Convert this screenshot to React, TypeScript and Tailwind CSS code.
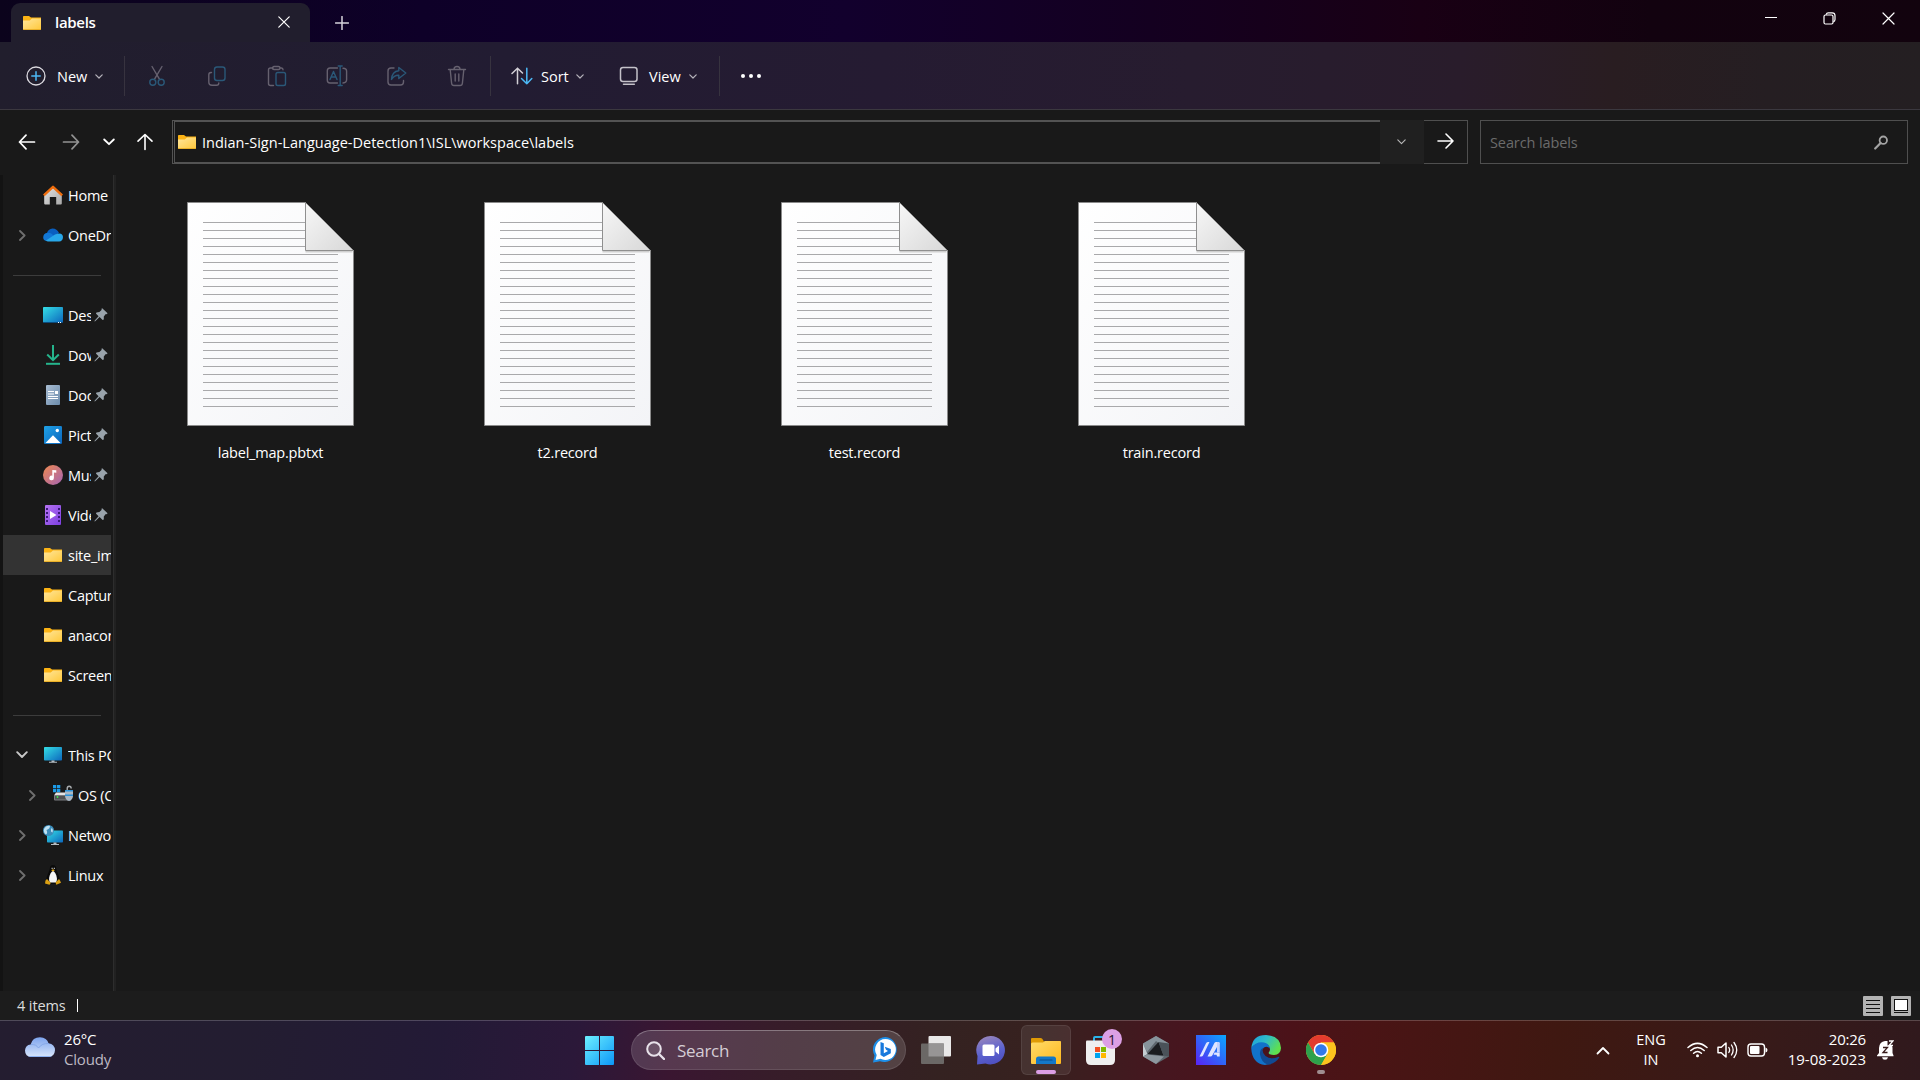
import type { ReactNode } from "react";

function Folder({ w = 18, h = 16, open = false }: { w?: number; h?: number; open?: boolean }) {
  return (
    <svg width={w} height={h} viewBox="0 0 18 16" preserveAspectRatio="none" className="shrink-0">
      <defs>
        <linearGradient id="fold" x1="0" y1="0" x2="1" y2="1">
          <stop offset="0" stopColor="#ffe69c" />
          <stop offset="1" stopColor="#ffc83a" />
        </linearGradient>
      </defs>
      <path d="M0 1.8Q0 1 .8 1H6l2 1.6h10V6H0z" fill={open ? "#dd9d08" : "#fbb315"} />
      <path d="M0 5.4h6.8L9 3.6h9v10.6q0 .8-.8.8H.8q-.8 0-.8-.8z" fill="url(#fold)" />
      <path d="M0 14.2h18v.2q0 .6-.8.6H.8q-.8 0-.8-.6z" fill="#e3a71c" />
    </svg>
  );
}

function Line({
  w,
  h,
  d,
  stroke = "#fff",
  sw = 1.5,
  className = "",
}: {
  w: number;
  h: number;
  d: string;
  stroke?: string;
  sw?: number;
  className?: string;
}) {
  return (
    <svg
      width={w}
      height={h}
      viewBox={`0 0 ${w} ${h}`}
      fill="none"
      stroke={stroke}
      strokeWidth={sw}
      strokeLinecap="round"
      strokeLinejoin="round"
      className={`shrink-0 ${className}`}
    >
      <path d={d} />
    </svg>
  );
}

function TitleBar() {
  return (
    <div className="flex h-[42px] shrink-0 bg-[linear-gradient(90deg,#0b031c_0%,#0e0028_22%,#12002d_44%,#140020_60%,#190014_74%,#12020f_86%,#12030e_100%)]">
      <div className="mt-[3px] ml-[11px] flex h-[39px] w-[299px] items-center rounded-t-[9px] bg-[#211e2d] pl-3">
        <Folder />
        <span className="ml-[14px] text-[15px] font-semibold tracking-[-0.3px]">labels</span>
        <Line w={12} h={12} d="M.8.8l10.4 10.4M11.2.8L.8 11.2" sw={1.2} className="-mt-px mr-[20px] ml-auto" />
      </div>
      <Line w={14} h={14} d="M7 .5v13M.5 7h13" stroke="#d6d3db" sw={1.5} className="mt-[16px] ml-[25px]" />
      <div className="ml-auto flex h-9 items-center pr-[25px]">
        <Line w={12} h={12} d="M.5 5.5h11" sw={1.2} />
        <svg width="13" height="13" viewBox="0 0 13 13" fill="none" stroke="#fff" strokeWidth="1.2" className="ml-[46px]">
          <rect x="1" y="3" width="9" height="9" rx="1.5" />
          <path d="M3.2 2.8V2.4Q3.6.8 5.2.8H9.2Q12 .8 12 3.6v4q0 1.800-1.600 2.200" />
        </svg>
        <Line w={13} h={13} d="M1 1l11 11M12 1L1 12" sw={1.2} className="ml-[46px]" />
      </div>
    </div>
  );
}

const G = "#66616f";
const B = "#2a5878";

function Tool({ children }: { children: ReactNode }) {
  return (
    <div className="flex w-[60px] justify-center">
      <svg width="22" height="22" viewBox="0 0 22 22" fill="none" strokeWidth="1.4" strokeLinecap="round" strokeLinejoin="round" stroke={G}>
        {children}
      </svg>
    </div>
  );
}

function Toolbar() {
  return (
    <div className="flex h-[68px] shrink-0 items-center border-b border-[#3b383f] bg-[linear-gradient(94deg,#211e2d_0%,#221c32_26%,#251b32_46%,#271c2f_62%,#291c2b_76%,#291d21_84%,#251e22_92%,#241f22_100%)] pt-px text-[14.5px]">
      <svg width="20" height="20" viewBox="0 0 20 20" fill="none" className="ml-[26px]">
        <circle cx="10" cy="10" r="9" stroke="#dcdae0" strokeWidth="1.3" />
        <path d="M10 5.800v8.400M5.800 10h8.400" stroke="#4cb8f5" strokeWidth="1.5" strokeLinecap="round" />
      </svg>
      <span className="ml-[11px] w-[38px] pt-[2px]">New</span>
      <Line w={8} h={5} d="M.8.8L4 4 7.200.8" stroke="#b5b2ba" sw={1.2} />
      <div className="ml-[21px] h-10 w-px bg-[#37333f]" />
      <div className="ml-[2px] flex">
        <Tool>
          <path d="M6 1.500L13.600 14.400M16 1.500L8.400 14.400" />
          <circle cx="6.800" cy="17.200" r="3" stroke={B} />
          <circle cx="15.200" cy="17.200" r="3" stroke={B} />
        </Tool>
        <Tool>
          <path d="M5.500 7.500H5Q2.800 7.500 2.800 9.700V17Q2.800 20.200 6 20.200h4.500q2.300 0 2.300-2.200" />
          <rect x="8.500" y="2" width="10.500" height="13.500" rx="2.500" stroke={B} />
        </Tool>
        <Tool>
          <path d="M7 3H4.500Q2.500 3 2.500 5v13.500q0 2 2 2H7.500M14 3h1.500q1.500 0 1.500 1.800" />
          <rect x="6.500" y="1.500" width="7.500" height="3" rx="1.500" />
          <rect x="10" y="7.500" width="9.500" height="13" rx="1.800" stroke={B} />
        </Tool>
        <Tool>
          <path d="M11.500 3H4Q1.300 3 1.300 5.700v9.600Q1.300 18 4 18h7.500M17 3.200q3.600 0 3.600 3v8.600q0 3-3.600 3.200" />
          <path d="M4 14.500L7.500 6.500l3.500 8M5.200 12h4.600M14.200 1v19.500M12.200 1h4M12.200 20.500h4" stroke={B} />
        </Tool>
        <Tool>
          <path d="M8 3H5Q2 3 2 6v11q0 3 3 3h9.500q3 0 3-3v-1.500" />
          <path d="M12.800 2.500l7 5.500-7 5.500v-3.300Q8 10 5.500 14.500 6 6.500 12.800 5.800z" stroke={B} />
        </Tool>
        <Tool>
          <path d="M2.500 4.500h17M8 4.300Q8 1.500 11 1.500t3 2.800M4.200 4.800l1.400 13.400q.2 2.300 2.400 2.300h6q2.200 0 2.400-2.300l1.400-13.400M9.200 9v7M12.800 9v7" />
        </Tool>
      </div>
      <div className="ml-[3px] h-10 w-px bg-[#37333f]" />
      <svg width="22" height="18" viewBox="0 0 22 18" fill="none" strokeWidth="1.5" strokeLinecap="round" strokeLinejoin="round" className="ml-[20px]">
        <path d="M1 6.500L6.500 1.200 11.500 6M6.500 1.200v15.600" stroke="#d2cfd6" />
        <path d="M10.500 11.500l5.300 5.300 5-5.300M15.800 16.800V1.200" stroke="#4cb8f5" />
      </svg>
      <span className="ml-[8px] w-[35px] pt-[2px]">Sort</span>
      <Line w={8} h={5} d="M.8.8L4 4 7.200.8" stroke="#b5b2ba" sw={1.2} />
      <svg width="20" height="20" viewBox="0 0 20 20" fill="none" stroke="#c4c1c9" strokeWidth="1.500" strokeLinecap="round" className="ml-[35px]">
        <rect x="1.500" y="1.500" width="16.500" height="14" rx="2.500" />
        <path d="M4.500 18.200h10.800" />
      </svg>
      <span className="ml-[10px] w-[40px] pt-[2px]">View</span>
      <Line w={8} h={5} d="M.8.8L4 4 7.200.8" stroke="#b5b2ba" sw={1.2} />
      <div className="ml-[22px] h-10 w-px bg-[#37333f]" />
      <div className="ml-[21px] flex gap-[4px]">
        <i className="size-1 rounded-full bg-white" />
        <i className="size-1 rounded-full bg-white" />
        <i className="size-1 rounded-full bg-white" />
      </div>
    </div>
  );
}

function AddressRow() {
  return (
    <div className="flex h-[65px] shrink-0 pt-[10px] text-[14.5px]">
      <div className="flex h-[44px] w-[172px] items-center">
        <Line w={18} h={16} d="M8 1.200L1.500 8 8 14.800M1.500 8h15" sw={1.700} className="ml-[18px]" />
        <Line w={18} h={16} d="M10 1.200L16.500 8 10 14.800M16.500 8h-15" stroke="#929292" sw={1.700} className="ml-[26px]" />
        <Line w={12} h={8} d="M1.200 1.500L6 6.200l4.800-4.700" sw={1.800} className="-mt-px ml-[23px]" />
        <Line w={18} h={18} d="M2 8.200L9 1.500l7 6.700M9 1.500V16.500" sw={1.600} className="ml-[21px]" />
      </div>
      <div className="h-[44px] w-[1208px] border border-r-0 border-[#535353] pl-px">
        <div className="flex h-[42px] items-center border border-r-0 border-[#535353] pl-[3px]">
          <Folder />
          <span className="ml-[6px] pt-[2px] whitespace-pre tracking-[0.015px]">Indian-Sign-Language-Detection1\ISL\workspace\labels</span>
        </div>
      </div>
      <div className="flex h-[44px] w-[44px] items-center justify-center bg-[#202020] pr-px">
        <Line w={9} h={6} d="M.8.800L4.500 4.700 8.200.8" stroke="#b8b8b8" sw={1.100} />
      </div>
      <div className="flex h-[44px] w-[44px] items-center justify-center border border-l-0 border-[#4f4f4f]">
        <Line w={17} h={16} d="M9 1l7 7-7 7M16 8H1" sw={1.600} className="-mt-[3px]" />
      </div>
      <div className="ml-[12px] flex h-[44px] w-[428px] items-center border border-[#4f4f4f] pr-[18px] pl-[9px] text-[#6b6b6b]">
        <span className="pt-[2px] tracking-[-0.1px]">Search labels</span>
        <svg width="15" height="15" viewBox="0 0 15 15" fill="none" stroke="#a3a3a3" strokeWidth="1.800" className="ml-auto">
          <circle cx="9.300" cy="5.200" r="3.700" />
          <path d="M6.600 8L1.200 13.500" strokeWidth="2.200" strokeLinecap="round" />
        </svg>
      </div>
    </div>
  );
}

const sideIcons: Record<string, ReactNode> = {
  home: (
    <>
      <path d="M1.200 9L10 2l8.800 7v9.500q0 1-1 1h-4.600V12H6.800v7.500H2.200q-1 0-1-1z" fill="url(#hg)" />
      <path d="M.8 10.300L10 1.800l9.200 8.500" stroke="#ee6c0c" strokeWidth="2.400" fill="none" strokeLinejoin="round" />
    </>
  ),
  onedrive: (
    <>
      <path d="M4 8Q5 4 9.500 3.500 14 3.500 16 8l-6 4z" fill="#0a5fc0" />
      <path d="M.2 12.500Q.2 8.500 4.500 7.800 8 7.500 10 10l6 6H4Q.3 15.800.2 12.500z" fill="#1277d6" />
      <path d="M3 15.500L12 9.500Q19.500 6.500 20 12q-.2 4.300-4 4.500H5Q3.800 16.500 3 15.500z" fill="#28a8ea" />
    </>
  ),
  desktop: (
    <>
      <rect x="0" y="2" width="20" height="15.500" rx=".8" fill="url(#bg1)" />
      <path d="M0 17.200h20v.8H0z" fill="#0a4a80" />
      <path d="M15 17h1v1h-1zM17 17h1v1h-1z" fill="#fff" />
    </>
  ),
  down: (
    <g fill="none" stroke="#25b48c" strokeWidth="2">
      <path d="M10 0v15M4.200 9.500L10 15.200l5.800-5.700" />
      <path d="M3 18.800h14" />
    </g>
  ),
  doc: (
    <>
      <rect x="3" y="0" width="14" height="20" rx="1" fill="url(#dg)" />
      <path d="M5 6.500h6M5 9h6M5 11.500h10M5 13.500h10" stroke="#fff" strokeWidth="1.200" />
      <path d="M12 6h3v3h-3z" fill="#fff" />
    </>
  ),
  pic: (
    <>
      <rect x="1" y="1" width="18" height="18" rx="1.300" fill="url(#pg)" />
      <path d="M2.500 18L10 10.200 17.500 18z" fill="#fff" />
      <circle cx="14.300" cy="5.500" r="1.700" fill="#fff" />
    </>
  ),
  music: (
    <>
      <circle cx="10" cy="10" r="10" fill="url(#mg)" />
      <path d="M9.300 5l4 .3v2.400l-2.400-.2v5.500a2.300 2.300 0 1 1-1.600-2.200z" fill="#fff" />
    </>
  ),
  video: (
    <>
      <rect x="2" y="0" width="16" height="20" rx="1" fill="url(#vg)" />
      <path d="M3 3h2v2H3zM3 7h2v2H3zM3 11h2v2H3zM3 15h2v2H3zM15 3h2v2h-2zM15 7h2v2h-2zM15 11h2v2h-2zM15 15h2v2h-2z" fill="#3a1a78" />
      <path d="M7 6l6.500 4L7 14z" fill="#fff" />
    </>
  ),
  pc: (
    <>
      <rect x="1" y="2" width="18" height="13.500" rx=".8" fill="url(#bg1)" />
      <path d="M8.500 15.500h3v1.300h2.500v1H6v-1h2.500z" fill="#b4bcc2" />
    </>
  ),
  drive: (
    <>
      <path d="M0 0h3.300v3.200H0zM4 0h3.300v3.200H4zM0 4h3.300v3.200H0zM4 4h3.300v3.200H4z" fill="#1c9be8" />
      <path d="M3 7.500h11l3 3H1z" fill="#e4e4e4" />
      <rect x="1" y="10" width="17" height="5.500" rx="1" fill="#7b7d80" />
      <path d="M2 11h15v3.500H2z" fill="#505254" />
      <circle cx="4.500" cy="12" r=".9" fill="#3eea4b" />
      <path d="M14.200 6V3.500q0-2.200 2-2.200t2 2.200" fill="none" stroke="#a9adb0" strokeWidth="1.400" />
      <path d="M12 5h8v6q-.5 4.200-4 5-3.500-.8-4-5z" fill="#aab9c6" />
      <path d="M12 5h8v1.500h-8zM12 9.500h8V11h-8z" fill="#2b94dc" />
    </>
  ),
  net: (
    <>
      <rect x="4" y="5.500" width="16" height="12" rx=".8" fill="url(#bg1)" />
      <path d="M10.500 17.500h3v1.500h2.500v1H8v-1h2.500z" fill="#b4bcc2" />
      <circle cx="5.500" cy="5.500" r="5.500" fill="#3b8dbb" />
      <path d="M1 4Q3 0 7 .8 7 4 3.500 5 5 8 3 9.500.2 7.500 1 4zM8.500 3Q10.500 4 9.500 7.500 7 7 8.500 3z" fill="#bfe1f2" />
    </>
  ),
  linux: (
    <>
      <path d="M10 0q3 0 3.200 3.600Q13.500 6 15 8.500q2.200 4 1 8l-3 2.500H7L4 16.500q-1.200-4 1-8Q6.600 6 6.800 3.600 7 0 10 0z" fill="#0a0a0a" />
      <path d="M10 6q2 .5 3.300 4.500 1.400 4.500-.3 7H7q-1.700-2.500-.3-7Q8 6.500 10 6z" fill="#f5f5f5" />
      <path d="M8.200 5.200l1.800-1 1.800 1L10 6.600z" fill="#e8a90e" />
      <path d="M8.600 2.800h1v1.300h-1zM10.800 2.800h1v1.300h-1z" fill="#ddd" />
      <path d="M4 14l3.800 4-1.300 1.800L2 18.500l.5-3zM16 14l-3.500 3.500.8 2.300 4.700-2-1-2.300z" fill="#dba012" />
    </>
  ),
};

function Defs() {
  const g: [string, string, string][] = [
    ["hg", "#e4e4e4", "#a8a8a8"],
    ["bg1", "#35dfe6", "#0c67bd"],
    ["dg", "#a9bdd3", "#6b8bab"],
    ["pg", "#1fa2e6", "#0b65bd"],
    ["mg", "#f0894f", "#a464b4"],
    ["vg", "#b673f2", "#7c3fe0"],
    ["paper", "#ffffff", "#f3f4f7"],
    ["flap", "#f7f7f7", "#d8d8d8"],
    ["win", "#6df0ff", "#0c97f8"],
  ];
  return (
    <svg width="0" height="0" className="absolute">
      <defs>
        {g.map(([id, a, b]) => (
          <linearGradient key={id} id={id} x1="0" y1="0" x2="1" y2="1">
            <stop offset="0" stopColor={a} />
            <stop offset="1" stopColor={b} />
          </linearGradient>
        ))}
      </defs>
    </svg>
  );
}

function Pin() {
  return (
    <svg width="14" height="14" viewBox="0 0 14 14" className="ml-[3px] shrink-0">
      <path d="M8.200.300L13.600 5.200 12.600 6.300 11.800 6 9.800 8.500 9.800 11.500 8.600 12 5.600 9 1.200 13.200.500 13.500.700 12.600 4.600 8.200 1.900 5.400 2.500 4.400 5.400 4 7.800 1.700 7.300.900z" fill="#98a2aa" />
    </svg>
  );
}

type Row = { icon: string; text: string; pin?: boolean; arrow?: "r" | "d"; sel?: boolean; indent?: boolean };
const rows: (Row | null)[] = [
  { icon: "home", text: "Home" },
  { icon: "onedrive", text: "OneDrive", arrow: "r" },
  null,
  { icon: "desktop", text: "Desktop", pin: true },
  { icon: "down", text: "Downloads", pin: true },
  { icon: "doc", text: "Documents", pin: true },
  { icon: "pic", text: "Pictures", pin: true },
  { icon: "music", text: "Music", pin: true },
  { icon: "video", text: "Videos", pin: true },
  { icon: "folder", text: "site_images", sel: true },
  { icon: "folder", text: "Captures" },
  { icon: "folder", text: "anaconda" },
  { icon: "folder", text: "Screenshots" },
  null,
  { icon: "pc", text: "This PC", arrow: "d" },
  { icon: "drive", text: "OS (C:)", arrow: "r", indent: true },
  { icon: "net", text: "Network", arrow: "r" },
  { icon: "linux", text: "Linux", arrow: "r" },
];

function Sidebar() {
  return (
    <div className="flex w-[116px] shrink-0 border-l-[3px] border-[#131313]">
      <div className="w-[108px] overflow-hidden">
        {rows.map((r, i) =>
          r === null ? (
            <div key={i} className="flex h-10 items-center">
              <div className="ml-[10px] h-px w-[88px] bg-[#3c3c3c]" />
            </div>
          ) : (
            <div key={i} className={`flex h-10 items-center ${r.sel ? "bg-[#333333]" : ""} ${r.indent ? "pl-[10px]" : ""}`}>
              <div className="flex w-[40px] shrink-0 items-center">
                {r.arrow === "r" && <Line w={7} h={11} d="M1 1l4.600 4.500L1 10" stroke="#6f6f6f" sw={1.800} className="ml-[16px]" />}
                {r.arrow === "d" && <Line w={12} h={8} d="M1.200 1.200L6 6l4.800-4.800" stroke="#c8c8c8" sw={1.900} className="ml-[13px]" />}
              </div>
              <div className="flex w-5 shrink-0 justify-center">
                {r.icon === "folder" ? (
                  <Folder />
                ) : (
                  <svg width="20" height="20" viewBox="0 0 20 20">
                    {sideIcons[r.icon]}
                  </svg>
                )}
              </div>
              <span className={`ml-[5px] shrink-0 overflow-hidden pt-[2px] text-[14.5px] whitespace-nowrap tracking-[-0.25px] ${r.pin ? "w-[23px]" : "w-[80px]"}`}>{r.text}</span>
              {r.pin && <Pin />}
            </div>
          ),
        )}
      </div>
      <div className="ml-[2px] h-full w-[3px] border-l border-[#2d2d2d] bg-[#212121]" />
    </div>
  );
}

function FileItem({ name }: { name: string }) {
  return (
    <div className="flex w-[297px] flex-col items-center">
      <svg width="167" height="224" viewBox="0 0 167 224">
        <path d="M.5.5H118.500L166.500 48.500V223.500H.5z" fill="url(#paper)" stroke="#8b8b8b" />
        {Array.from({ length: 24 }, (_, i) => (
          <path key={i} d={`M16 ${20.5 + i * 8}H${i < 4 ? 118 : 151}`} stroke="#a9a9ab" />
        ))}
        <path d="M118.500 49.500h47" stroke="#cfcfcf" strokeWidth="2" />
        <path d="M118.500.5L166.500 48.500H118.500z" fill="url(#flap)" stroke="#8f8f8f" />
      </svg>
      <span className="mt-[16px] text-[14.5px] leading-[22px] tracking-[-0.2px]">{name}</span>
    </div>
  );
}

function StatusBar() {
  return (
    <div className="flex h-[29px] shrink-0 items-center bg-[#1c1c1c] pr-[9px] pl-[17px] text-[14.5px]">
      <span className="w-[60px] tracking-[-0.1px] text-[#dcdcdc]">4 items</span>
      <div className="h-[13px] w-px bg-white" />
      <svg width="20" height="20" viewBox="0 0 20 20" className="ml-auto">
        <rect width="20" height="20" rx="1" fill="#b3b3b3" />
        <path d="M3 4.500h14M3 8.500h14M3 12.500h14M3 16.500h14" stroke="#111" />
      </svg>
      <svg width="20" height="20" viewBox="0 0 20 20" className="ml-2">
        <rect width="20" height="20" rx="1" fill="#b3b3b3" />
        <rect x="3.500" y="3.500" width="13" height="11" fill="#fff" stroke="#111" />
        <path d="M3 16.500h14" stroke="#111" />
      </svg>
    </div>
  );
}

function Taskbar() {
  return (
    <div className="flex h-[60px] shrink-0 items-center border-t border-white/20 bg-[linear-gradient(97deg,#241d30_0%,#231d31_13%,#231a36_23%,#2b1839_30%,#3a1631_35%,#371c2a_40%,#342221_49%,#37211f_54%,#46161f_61%,#4b1219_67%,#4a1415_71%,#3f1811_81%,#371a19_92%,#30191d_100%)] pb-px">
      <div className="flex w-[585px] items-center pl-[25px]">
        <svg width="30" height="20" viewBox="0 0 30 20" className="-mt-[6px]">
          <defs>
            <linearGradient id="cl" x1="0" y1="0" x2="0" y2="1">
              <stop offset="0" stopColor="#7da4ee" />
              <stop offset="1" stopColor="#d8e6fb" />
            </linearGradient>
          </defs>
          <path d="M6.500 20Q0 19.500 0 13.500 .500 8 5.600 7.500 7.500.200 15 .2q7 .3 8.500 6Q29.800 7 30 13.300 29.500 19.500 24 20z" fill="url(#cl)" />
          <path d="M6 7.500Q11 7 13.500 11 17 6 23.500 6.500" fill="none" stroke="#86a9ea" strokeWidth="1" />
          <path d="M3 19h24q-1 1-3 1H6.500Q4 20 3 19z" fill="#8db2f2" />
        </svg>
        <div className="-mt-[3px] ml-[9px] flex flex-col text-[15px] leading-5 tracking-[-0.2px]">
          <span>26°C</span>
          <span className="text-[#bdb9c3]">Cloudy</span>
        </div>
      </div>
      <svg width="29" height="29" viewBox="0 0 29 29" className="mt-px">
        <path d="M1 0H14V14H0V1Q0 0 1 0zM15 0H28q1 0 1 1V14H15zM0 15H14V29H1Q0 29 0 28zM15 15H29V28q0 1-1 1H15z" fill="url(#win)" />
      </svg>
      <div className="ml-[17px] flex h-10 w-[275px] items-center rounded-full border border-white/10 border-t-white/30 bg-white/15 pl-[14px]">
        <svg width="19" height="19" viewBox="0 0 19 19" fill="none" stroke="#e8e2ea" strokeWidth="2" strokeLinecap="round">
          <circle cx="8" cy="8" r="6.800" fill="#ffffff22" />
          <path d="M13 13l5 5" strokeWidth="2.400" />
        </svg>
        <span className="ml-[12px] pt-px text-[17px] tracking-[-0.3px] text-[#d5cdd5]">Search</span>
        <svg width="25" height="26" viewBox="0 0 25 26" className="mr-[7px] ml-auto">
          <path d="M12.500 0A12.500 12.500 0 1 1 7 24.200L0 25.500 1.500 18.500A12.500 12.500 0 0 1 12.500 0z" fill="#1d8fe8" />
          <path d="M12.500 2a10.500 10.500 0 1 1-5 19.800L2.500 23l1.200-5A10.500 10.500 0 0 1 12.500 2z" fill="#fff" />
          <path d="M7.500 5l3.300 1.300v10L15 14l-2-1.200-1.200-3 6 2.200v4.200L10.800 20l-3.300-2z" fill="#1879dc" />
        </svg>
      </div>
      <svg width="30" height="28" viewBox="0 0 30 28" className="ml-[15px]">
        <rect x="7.500" width="22.500" height="20.500" rx="1" fill="#e9e8e8" />
        <rect y="7.500" width="23" height="20.500" rx="1" fill="#6b6866" />
        <path d="M7.500 7.500h15.500v13H7.500z" fill="#979595" />
      </svg>
      <svg width="29" height="29" viewBox="0 0 29 29" className="mt-px ml-[25px]">
        <defs>
          <linearGradient id="ch" x1="0.200" y1="0" x2="0.500" y2="1">
            <stop offset="0" stopColor="#9a86bb" />
            <stop offset=".6" stopColor="#5b62cf" />
            <stop offset="1" stopColor="#4f50c0" />
          </linearGradient>
        </defs>
        <path d="M14.500 0a14.200 14.200 0 1 1-5 27.400L1 28.500 1.500 20A14.200 14.200 0 0 1 14.500 0z" fill="url(#ch)" />
        <rect x="6.500" y="8.500" width="12" height="11.500" rx="1.500" fill="#fff" />
        <path d="M19.500 12.500l3.500-3v9l-3.500-3z" fill="#fff" />
      </svg>
      <div className="ml-[16px] flex h-[50px] w-[50px] flex-col items-center rounded-md border border-white/8 bg-white/8 pt-[11px]">
        <svg width="30" height="27" viewBox="0 0 30 27" className="shrink-0">
          <path d="M0 2Q0 1 1 1h8.500q1 0 1.700.800L13 4.500h16q1 0 1 1V12H0z" fill="#df9a05" />
          <path d="M0 7q0-1.500 1.500-1.500L12 5.500l2-1.500h15q1 0 1 1v21q0 1-1 1H1q-1 0-1-1z" fill="url(#tf)" />
          <defs>
            <linearGradient id="tf" x1="0" y1="0" x2="1" y2="1">
              <stop offset="0" stopColor="#ffdb6b" />
              <stop offset="1" stopColor="#ffb81c" />
            </linearGradient>
          </defs>
          <path d="M5 27v-5q0-2.500 2.500-2.500h15Q25 19.500 25 22v5z" fill="#1478c8" />
          <path d="M9 23h12" stroke="#0b4c8c" strokeWidth="1.200" strokeLinecap="round" />
        </svg>
        <i className="mt-[6px] h-1 w-5 shrink-0 rounded-full bg-[#dc9fe5]" />
      </div>
      <div className="relative mt-px ml-[15px] h-[29px] w-[29px]">
        <svg width="29" height="29" viewBox="0 0 29 29">
          <path d="M8 5V2Q8 1 9 1h10" fill="none" stroke="#2cb3e8" strokeWidth="2" />
          <path d="M0 5.500Q0 4.500 1 4.500h27q1 0 1 1V24q0 5-5 5H5q-5 0-5-5z" fill="#efefef" />
          <path d="M9 11h5v5H9z" fill="#f25022" />
          <path d="M15 11h5v5h-5z" fill="#7fba00" />
          <path d="M9 17h5v5H9z" fill="#00a4ef" />
          <path d="M15 17h5v5h-5z" fill="#ffb900" />
        </svg>
        <div className="absolute -top-[7px] left-[16px] flex size-5 items-center justify-center rounded-full bg-[#dc9fe5] text-[14px] text-[#2a1530]">1</div>
      </div>
      <svg width="28" height="28" viewBox="0 0 28 28" className="ml-[27px]">
        <path d="M14 0L27 7.500V20.500L14 28 1 20.500V7.500z" fill="#5d666d" />
        <path d="M14 0L27 7.500 21 10 14 5 5 16 1 7.500z" fill="#87939b" />
        <path d="M1 7.500L5.500 18 1 20.500z" fill="#c4cdd2" />
        <path d="M1 20.500L5.500 18.500 22 20.500 14 28z" fill="#8d979e" />
        <path d="M16.500 6L21.500 19.500 5.500 18z" fill="#1b1d20" />
        <path d="M16.500 6L27 7.500V20.500L21.500 19.500z" fill="#4a5259" />
      </svg>
      <svg width="30" height="30" viewBox="0 0 30 30" className="ml-[26px]">
        <defs>
          <linearGradient id="ma" x1="0" y1="1" x2="1" y2="0">
            <stop offset="0" stopColor="#5a22f5" />
            <stop offset=".5" stopColor="#2f66f8" />
            <stop offset="1" stopColor="#0aa8ff" />
          </linearGradient>
        </defs>
        <rect width="30" height="30" fill="url(#ma)" />
        <path d="M3.500 21.500L10.200 8q.6-1 2-1h1.300L7 20.500q-.5 1-1.700 1z" fill="#dfe5ff" />
        <path d="M11.500 21.500L18.400 8q.5-1 1.700-1h2.400v6.800L21 14.600V12l-4.800 8.500q-.5 1-1.700 1z" fill="#dfe5ff" />
        <path d="M18.500 17.500h5.200v4h-2.500l-.7-1.800h-2.900z" fill="#dfe5ff" />
        <path d="M21 7h1.600q1.200 0 1.200 1.200v9.300H21z" fill="#c3d2ff" />
      </svg>
      <svg width="30" height="30" viewBox="0 0 30 30" className="ml-[25px]">
        <defs>
          <linearGradient id="e1" x1="0" y1="0" x2="1" y2=".5">
            <stop offset="0" stopColor="#1b9de0" />
            <stop offset=".5" stopColor="#30bdc6" />
            <stop offset="1" stopColor="#5fe04e" />
          </linearGradient>
        </defs>
        <path d="M.300 13Q1.500 0 15 0 29.500 1 30 13q-.3 6.500-7 7-5-.2-5.500-2 1.600-1.600 1.500-4-.5-4-5-5.500Q5 7 .3 13z" fill="url(#e1)" />
        <path d="M.200 13Q4.500 6.500 13 7.500q5 1.200 6 6-3-3-6-1-3.500 3-1.500 8 3.500 7 10 6.800Q17 30 14 30 1 28.500.2 13z" fill="#1272ca" />
        <path d="M12 12.800Q8.500 15 9 19.500 10.500 28 17 29.800 24.500 28.500 28.300 22.500 28.300 21.500 27 22 20 25 14.500 21 10.500 17.500 12 12.800z" fill="#114a92" />
      </svg>
      <div className="ml-[25px] flex h-[50px] w-[30px] flex-col items-center pt-[10px]">
        <svg width="30" height="30" viewBox="0 0 30 30" className="shrink-0">
          <circle cx="15" cy="15" r="15" fill="#fcc31e" />
          <path d="M15 15L8.500 18.700 2 7.500A15 15 0 0 1 28 7.500H15z" fill="#e33b2e" />
          <path d="M2 7.500A15 15 0 0 0 15 30L21.500 18.700H8.500z" fill="#2ea14c" />
          <path d="M15 30L21.500 18.700 15 15V22L9 18.700z" fill="#2ea14c" />
          <path d="M15 7.500H28A15 15 0 0 1 15 30L21.500 18.700z" fill="#fcc31e" />
          <circle cx="15" cy="15" r="7.300" fill="#fff" />
          <circle cx="15" cy="15" r="5.800" fill="#3279ea" />
        </svg>
        <i className="mt-[5px] h-1 w-2 shrink-0 rounded-full bg-[#a08e91]" />
      </div>
      <Line w={14} h={9} d="M1.500 7.500L7 2l5.500 5.500" sw={1.800} className="ml-auto" />
      <div className="ml-[25px] flex w-[32px] flex-col items-center text-[14.5px] leading-5">
        <span>ENG</span>
        <span>IN</span>
      </div>
      <svg width="21" height="16" viewBox="0 0 21 16" fill="none" stroke="#fff" strokeWidth="1.500" strokeLinecap="round" className="-mt-px ml-[20px]">
        <path d="M1 5.500Q10.500-2.800 20 5.500M3.800 8.500Q10.500 2.500 17.200 8.500M6.600 11.300Q10.500 7.800 14.400 11.300" />
        <circle cx="10.500" cy="13.700" r="1.500" fill="#fff" stroke="none" />
      </svg>
      <svg width="21" height="18" viewBox="0 0 21 18" fill="none" stroke="#fff" strokeWidth="1.500" strokeLinecap="round" strokeLinejoin="round" className="ml-[9px]">
        <path d="M1 6.200h3.300L9 2v14l-4.700-4.200H1z" />
        <path d="M11.800 6.500Q13.500 9 11.800 11.500M14.500 4Q17.800 9 14.500 14M17 1.500Q22.500 9 17 16.500" strokeWidth="1.300" />
      </svg>
      <svg width="21" height="14" viewBox="0 0 21 14" fill="none" className="ml-[9px]">
        <rect x="1" y="1" width="16.500" height="12" rx="3" stroke="#fff" strokeWidth="1.400" />
        <rect x="3" y="3" width="9.500" height="8" rx="1" fill="#fff" />
        <path d="M18.500 4.500q2 .5 2 2.500t-2 2.500z" fill="#fff" />
      </svg>
      <div className="-mt-[3px] ml-[15px] flex w-[83px] flex-col items-end text-[15px] leading-5">
        <span className="tracking-[-0.2px]">20:26</span>
        <span>19-08-2023</span>
      </div>
      <svg width="17" height="20" viewBox="0 0 17 20" className="mr-[26px] ml-[11px]">
        <path d="M2 13V8Q2.500 1.500 8 1h2.500v4.500H13q2.500 0 2.500 2V13l1 2.500v.8H0v-.8z" fill="#fff" />
        <path d="M5 17.200h6Q10.500 19.800 8 19.800T5 17.200z" fill="#fff" />
        <path d="M6 7.500h4.500L6 12.500h4.500" fill="none" stroke="#371a1a" strokeWidth="1.300" />
        <path d="M12 1h4l-4 4.500h4" fill="none" stroke="#fff" strokeWidth="1.300" />
      </svg>
    </div>
  );
}

export default function App() {
  return (
    <div className="flex h-[1080px] w-[1920px] flex-col overflow-hidden bg-[#191919] font-['Open_Sans','Noto_Sans',sans-serif] text-white">
      <Defs />
      <TitleBar />
      <Toolbar />
      <AddressRow />
      <div className="flex min-h-0 flex-1">
        <Sidebar />
        <div className="flex pt-[27px] pl-[6px]">
          <FileItem name="label_map.pbtxt" />
          <FileItem name="t2.record" />
          <FileItem name="test.record" />
          <FileItem name="train.record" />
        </div>
      </div>
      <StatusBar />
      <Taskbar />
    </div>
  );
}
